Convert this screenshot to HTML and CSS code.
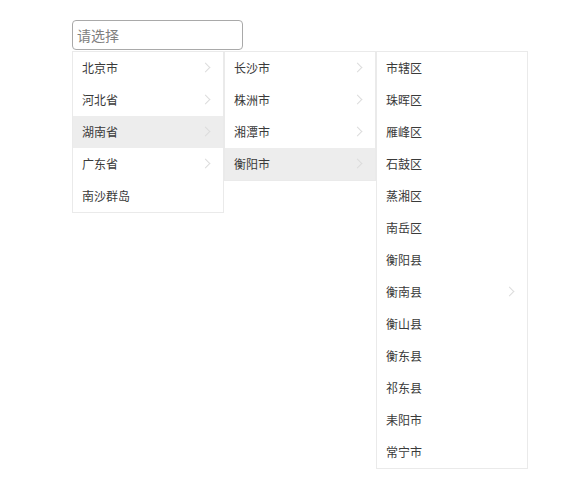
FILE: index.html
```html
<!DOCTYPE html>
<html lang="zh-CN">
<head>
    <meta charset="UTF-8">
    <title>级联选择</title>
    <link rel="stylesheet" href="styles.css">
</head>
<body>
    <div class="cascader">
        <input class="cascader-input" type="text" placeholder="请选择">
        <div class="menus">
            <ul class="menu">
                <li class="item">北京市<span class="arrow"></span></li>
                <li class="item">河北省<span class="arrow"></span></li>
                <li class="item active">湖南省<span class="arrow"></span></li>
                <li class="item">广东省<span class="arrow"></span></li>
                <li class="item">南沙群岛</li>
            </ul>
            <ul class="menu">
                <li class="item">长沙市<span class="arrow"></span></li>
                <li class="item">株洲市<span class="arrow"></span></li>
                <li class="item">湘潭市<span class="arrow"></span></li>
                <li class="item active">衡阳市<span class="arrow"></span></li>
            </ul>
            <ul class="menu">
                <li class="item">市辖区</li>
                <li class="item">珠晖区</li>
                <li class="item">雁峰区</li>
                <li class="item">石鼓区</li>
                <li class="item">蒸湘区</li>
                <li class="item">南岳区</li>
                <li class="item">衡阳县</li>
                <li class="item">衡南县<span class="arrow"></span></li>
                <li class="item">衡山县</li>
                <li class="item">衡东县</li>
                <li class="item">祁东县</li>
                <li class="item">耒阳市</li>
                <li class="item">常宁市</li>
            </ul>
        </div>
    </div>
</body>
</html>
```
FILE: styles.css
```css
body {
    margin: 0;
    padding: 20px 0 0 72px;
    background: #fff;
    font-family: "Microsoft YaHei", "Noto Sans CJK SC", sans-serif;
    color: #333;
}
.cascader-input {
    box-sizing: border-box;
    width: 171px;
    height: 30px;
    padding: 0 4px;
    border: 1px solid #a9a9a9;
    border-radius: 4px;
    font-family: inherit;
    font-size: 14px;
    color: #333;
    outline: none;
}
.cascader-input::placeholder {
    color: #808080;
}
.menus {
    display: flex;
    align-items: flex-start;
    margin-top: 1px;
}
.menu {
    list-style: none;
    margin: 0;
    padding: 0;
    width: 150px;
    border: 1px solid #eaeaea;
    background: #fff;
}
.item {
    position: relative;
    height: 32px;
    line-height: 32px;
    padding: 0 9px;
    font-size: 12px;
    color: #3a3a3a;
}
.item.active {
    background: #ededed;
}
.arrow {
    position: absolute;
    right: 14px;
    top: 12px;
    width: 6px;
    height: 6px;
    border-top: 1px solid #dcdcdc;
    border-right: 1px solid #dcdcdc;
    transform: rotate(45deg);
}
```
